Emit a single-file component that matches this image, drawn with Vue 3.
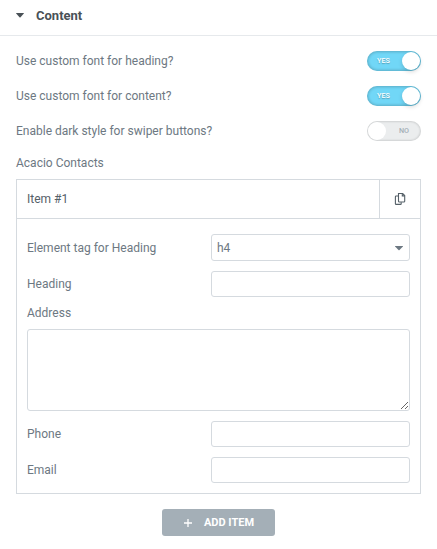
<script setup>
import { ref, reactive } from 'vue';

const isOpen = ref(true);

const switches = reactive([
  { id: 'heading-font', label: 'Use custom font for heading?', active: true },
  { id: 'content-font', label: 'Use custom font for content?', active: true },
  { id: 'dark-swiper', label: 'Enable dark style for swiper buttons?', active: false }
]);

const tags = ['h1', 'h2', 'h3', 'h4', 'h5', 'h6'];

let nextId = 2;
const items = reactive([createItem(1)]);

function createItem(id) {
  return { id, tag: 'h4', heading: '', address: '', phone: '', email: '' };
}

function addItem() {
  items.push(createItem(nextId++));
}

function duplicateItem(index) {
  items.splice(index + 1, 0, { ...items[index], id: nextId++ });
}
</script>

<template>
  <section class="panel">
    <header class="panel-header" @click="isOpen = !isOpen">
      <svg class="caret" :class="{ closed: !isOpen }" viewBox="0 0 8 5">
        <path d="M0.4 0h7.2q.6 0 .2.5L4.5 4.3q-.5.5-1 0L.2.5Q-.2 0 .4 0z" />
      </svg>
      <h2>Content</h2>
    </header>

    <div v-if="isOpen" class="controls">
      <div v-for="item in switches" :key="item.id" class="switch-row">
        <span class="label">{{ item.label }}</span>
        <button
          type="button"
          role="switch"
          :aria-checked="item.active"
          :class="['switch', { on: item.active }]"
          @click="item.active = !item.active"
        >
          <span class="switch-text">{{ item.active ? 'YES' : 'NO' }}</span>
          <span class="switch-handle"></span>
        </button>
      </div>

      <div class="label repeater-label">Acacio Contacts</div>

      <!-- Repeater -->
      <div v-for="(item, index) in items" :key="item.id" class="item">
        <div class="item-header">
          <div class="item-title">Item #{{ index + 1 }}</div>
          <button type="button" class="item-copy" aria-label="Duplicate" @click="duplicateItem(index)">
            <svg viewBox="0 0 12 14">
              <path d="M4.5 1.5h4.2l2 2v5.7q0 .8-.8.8H5.3q-.8 0-.8-.8V1.5z" />
              <path d="M8.3 1.5v2.4h2.4" />
              <path d="M4.3 4H2.1q-.7 0-.7.7v7q0 .7.7.7h4.4q.7 0 .7-.7v-1.4" />
            </svg>
          </button>
        </div>

        <div class="item-fields">
          <label class="field">
            <span class="label">Element tag for Heading</span>
            <span class="select-wrap">
              <select v-model="item.tag">
                <option v-for="tag in tags" :key="tag">{{ tag }}</option>
              </select>
              <svg class="select-arrow" viewBox="0 0 8 5">
                <path d="M.3 0h7.4q.5 0 .2.5L4.5 4.1q-.5.5-1 0L.1.5Q-.2 0 .3 0z" />
              </svg>
            </span>
          </label>
          <label class="field">
            <span class="label">Heading</span>
            <input v-model="item.heading" type="text" />
          </label>
          <label class="field field-block">
            <span class="label">Address</span>
            <textarea v-model="item.address"></textarea>
          </label>
          <label class="field">
            <span class="label">Phone</span>
            <input v-model="item.phone" type="text" />
          </label>
          <label class="field">
            <span class="label">Email</span>
            <input v-model="item.email" type="text" />
          </label>
        </div>
      </div>

      <button type="button" class="add-button" @click="addItem">
        <svg viewBox="0 0 8 8">
          <path d="M4 0v8M0 4h8" />
        </svg>
        <span>Add Item</span>
      </button>
    </div>
  </section>
</template>

<style>
body {
  background: #fff;
}
</style>

<style scoped>
.panel,
.panel * {
  box-sizing: border-box;
}

.panel {
  font-family: Roboto, Arial, sans-serif;
  font-size: 12px;
  line-height: 14px;
  color: #6d7882;
}

.panel button,
.panel input,
.panel select,
.panel textarea {
  font-family: inherit;
  font-size: 12px;
  color: inherit;
  margin: 0;
  outline: none;
}

.panel-header {
  display: flex;
  align-items: center;
  height: 36px;
  padding: 0 16px 4px;
  border-bottom: 1px solid #e6e9ec;
  cursor: pointer;
}

.panel-header h2 {
  margin: 0 0 0 12px;
  font-size: 13px;
  line-height: 15px;
  font-weight: 700;
  color: #495157;
}

.caret {
  width: 8px;
  height: 5px;
  fill: #495157;
}

.caret.closed {
  transform: rotate(-90deg);
}

.controls {
  display: flex;
  flex-direction: column;
  padding: 15px 16px 0;
}

/* Switches */
.switch-row {
  display: flex;
  justify-content: space-between;
  align-items: center;
  height: 20px;
  margin-bottom: 15px;
}

.switch {
  display: flex;
  flex-direction: row-reverse;
  align-items: center;
  width: 54px;
  height: 20px;
  padding: 1px;
  border: 0;
  border-radius: 10px;
  background: #ebedee;
  box-shadow: inset 0 0 2px 1px rgba(0, 0, 0, 0.12);
  cursor: pointer;
}

.switch.on {
  flex-direction: row;
  background: #71d7f7;
  box-shadow: inset 0 0 3px 1px rgba(0, 0, 0, 0.2);
}

.panel .switch-text {
  flex: 1;
  padding-left: 2px;
  font-size: 7.2px;
  line-height: 18px;
  font-weight: 500;
  text-align: center;
  color: #a4afb7;
}

.panel .switch.on .switch-text {
  padding: 0 3px 0 0;
  color: #fff;
  text-shadow: 0 1px 1px rgba(0, 0, 0, 0.25);
}

.switch-handle {
  width: 18px;
  height: 18px;
  border-radius: 50%;
  background: #fff;
}

.switch.on .switch-handle {
  box-shadow: 0 2px 4px rgba(0, 0, 0, 0.15);
}

/* Repeater */
.repeater-label {
  margin-bottom: 9px;
}

.item {
  border: 1px solid #d5dadf;
}

.item + .item {
  margin-top: 5px;
}

.item-header {
  display: flex;
  height: 39px;
  border-bottom: 1px solid #d5dadf;
}

.item-title {
  flex: 1;
  padding-left: 10px;
  line-height: 38px;
  color: #556068;
}

.item-copy {
  display: flex;
  align-items: center;
  justify-content: center;
  width: 41px;
  padding: 0;
  border: 0;
  border-left: 1px solid #d5dadf;
  background: none;
  cursor: pointer;
}

.item-copy svg {
  width: 12px;
  height: 14px;
  fill: none;
  stroke: #556068;
  stroke-width: 1.1;
}

.item-fields {
  display: flex;
  flex-direction: column;
  gap: 10px;
  padding: 15px 10px 10px;
}

.field {
  display: flex;
  justify-content: space-between;
  align-items: center;
}

.field input,
.select-wrap {
  width: 199px;
}

.field input,
.field select,
.field textarea {
  padding: 0 5px;
  border: 1px solid #d5dadf;
  border-radius: 3px;
  background: #fff;
}

.field input {
  height: 26px;
}

.select-wrap {
  position: relative;
  height: 27px;
}

.field select {
  display: block;
  width: 100%;
  height: 27px;
  appearance: none;
}

.select-arrow {
  position: absolute;
  top: 12px;
  right: 7px;
  width: 8px;
  height: 5px;
  fill: #6d7882;
  pointer-events: none;
}

.field-block {
  flex-direction: column;
  align-items: stretch;
  margin-top: -1px;
}

.field-block .label {
  margin-bottom: 9px;
}

.field textarea {
  display: block;
  width: 100%;
  height: 82px;
  resize: vertical;
}

.panel .add-button {
  display: flex;
  align-items: center;
  justify-content: center;
  align-self: center;
  gap: 12px;
  width: 113px;
  height: 27px;
  margin-top: 15px;
  padding: 0 0 0 1px;
  border: 0;
  border-radius: 3px;
  background: #a4afb7;
  color: #fff;
  font-size: 11px;
  font-weight: 700;
  text-transform: uppercase;
  cursor: pointer;
}

.add-button svg {
  width: 8px;
  height: 8px;
  stroke: #fff;
  stroke-width: 1.3;
}
</style>
